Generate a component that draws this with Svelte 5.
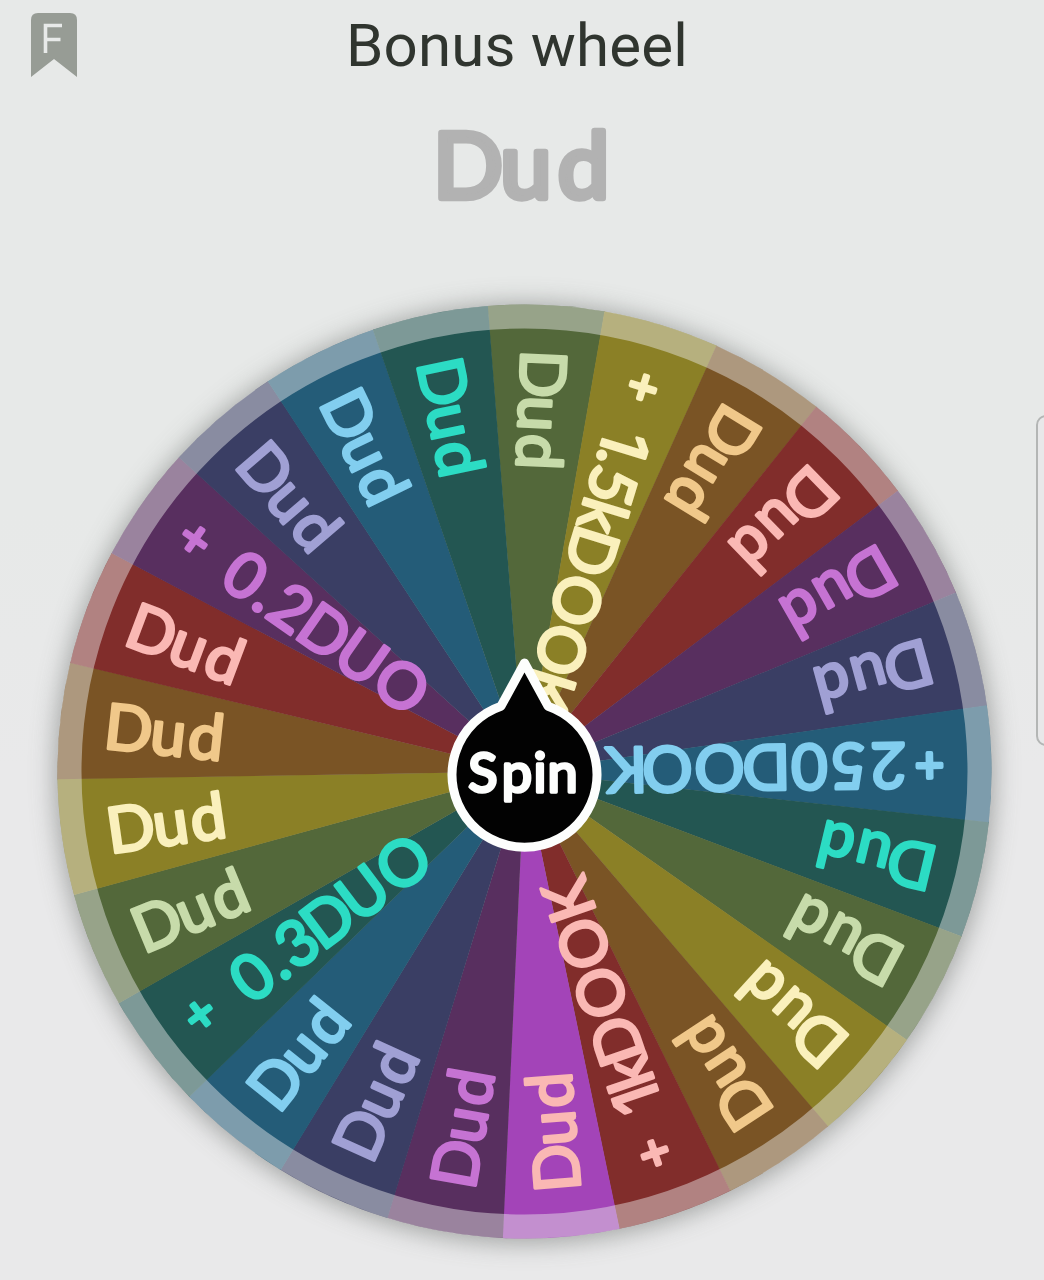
<script>
  const CX = 524.5;
  const CY = 511.5;
  const R = 467;
  const STEP = 14.4;
  const START = 355.45;

  const tones = {
    green: { fill: '#53683a', ink: '#c7dbaa' },
    yellow: { fill: '#8b8026', ink: '#faf0bc' },
    brown: { fill: '#7a5425', ink: '#f0c88a' },
    red: { fill: '#812d2b', ink: '#fab8b4' },
    purple: { fill: '#582f5f', ink: '#c673d3' },
    navy: { fill: '#3a3e64', ink: '#a0a0d4' },
    blue: { fill: '#245c78', ink: '#82ceef' },
    teal: { fill: '#235652', ink: '#2cdcc4' },
    bright: { fill: '#a344b8', ink: '#fab8b4' }
  };

  const order = ['green', 'yellow', 'brown', 'red', 'purple', 'navy', 'blue', 'teal'];

  // Distance of each glyph's middle from the wheel's centre.
  const dud = { text: 'Dud', at: [398, 358, 320] };
  const prizes = {
    1: { text: '+1.5kDOOK', at: [402, 342, 325, 299, 267, 230, 179, 127, 84] },
    6: { text: '+250DOOK', at: [405, 364, 324, 285, 242, 195, 143, 102] },
    11: { text: '+1kDOOK', at: [403, 346, 320, 285, 234, 182, 136] },
    16: { text: '+0.3DUO', at: [405, 341, 313, 285, 246, 202, 152] },
    21: { text: '+0.2DUO', at: [403, 341, 313, 285, 244, 199, 150] }
  };

  function toneOf(i) {
    if (i < 12) return order[i % 8];
    if (i === 12) return 'bright';
    return ['purple', 'navy', 'blue', 'teal', 'green', 'yellow', 'brown', 'red'][(i - 13) % 8];
  }

  function point(deg) {
    const a = (deg * Math.PI) / 180;
    return `${(CX + R * Math.sin(a)).toFixed(2)} ${(CY - R * Math.cos(a)).toFixed(2)}`;
  }

  const slices = Array.from({ length: 25 }, (_, i) => {
    const from = START + i * STEP;
    const label = prizes[i] ?? dud;
    return {
      tone: tones[toneOf(i)],
      path: `M${CX} ${CY}L${point(from)}A${R} ${R} 0 0 1 ${point(from + STEP + 0.05)}Z`,
      turn: from + STEP / 2 - 270,
      glyphs: [...label.text].map((ch, k) => ({ ch, x: -label.at[k] }))
    };
  });
</script>

<main>
  <header>
    <svg class="bookmark" viewBox="0 0 46 64" width="46" height="64">
      <path d="M0 7Q0 0 7 0H39Q46 0 46 7V64L23 46L0 64Z" />
      <path class="mark" d="M31 12.5H14.5V40M14.5 26.500H29.500" />
    </svg>
    <h1>Bonus wheel</h1>
  </header>

  <svg class="result" viewBox="0 0 1044 140" width="1044" height="140">
    <text x="468 526 583.500" y="104">Dud</text>
  </svg>

  <svg class="wheel" viewBox="0 0 1044 1020" width="1044" height="1020">
    <defs>
      <filter id="soft" x="-10%" y="-10%" width="120%" height="120%">
        <feGaussianBlur stdDeviation="13" />
      </filter>
    </defs>
    <circle class="shadow" cx={CX} cy={CY + 2} r="469" filter="url(#soft)" />
    {#each slices as s}
      <path d={s.path} fill={s.tone.fill} />
    {/each}
    <circle class="rim" cx={CX} cy={CY} r="455" />
    {#each slices as s}
      <g transform={`translate(${CX} ${CY}) rotate(${s.turn})`} fill={s.tone.ink} stroke={s.tone.ink}>
        <text class="label">
          {#each s.glyphs as g}<tspan class:plus={g.ch === '+'} class:one={g.ch === '1'} x={g.x} y={g.ch === '+' ? 16 : 22.5}>{g.ch}</tspan>{/each}
        </text>
      </g>
    {/each}
    <path class="hub" d="M501 446.200L524.500 403L548 446.200A72.500 72.500 0 1 1 501 446.200Z" />
    <text class="spin" x="483 517 540 562.500" y="532">Spin</text>
  </svg>

  <aside></aside>
</main>

<style>
  :global(body) {
    background: #e7e9e8;
  }
  main {
    position: relative;
    width: 1044px;
    height: 1280px;
    overflow: hidden;
    display: flex;
    flex-direction: column;
    background: linear-gradient(#e7e9e8 0 40%, #e9e9ea 60%);
  }
  header {
    display: grid;
    grid-template-columns: 46px 1fr 46px;
    align-items: start;
    height: 94px;
    box-sizing: border-box;
    padding: 13px 41px 0 31px;
    flex: none;
  }
  .bookmark {
    fill: #979c95;
  }
  .mark {
    fill: none;
    stroke: #e8eae9;
    stroke-width: 3.6;
  }
  h1 {
    margin: -2px 0 0;
    text-align: center;
    font: 400 60px/70px Roboto, sans-serif;
    letter-spacing: 0.2px;
    color: #30352f;
  }
  .result,
  .wheel {
    display: block;
    flex: none;
  }
  .wheel {
    margin-top: 26px;
  }
  .result text {
    font: 400 92px Lato, sans-serif;
    text-anchor: middle;
    fill: #b2b2b2;
    stroke: #b2b2b2;
    stroke-width: 6.5;
    stroke-linejoin: round;
  }
  .shadow {
    fill: #8d908e;
    opacity: 0.82;
  }
  .rim {
    fill: none;
    stroke: rgba(235, 235, 235, 0.45);
    stroke-width: 24;
  }
  .label {
    font: 400 63px Lato, sans-serif;
    text-anchor: middle;
    stroke-width: 3.2;
    stroke-linejoin: round;
  }
  .plus {
    font-size: 50px;
    stroke-width: 4;
  }
  .one {
    font-family: Inter, sans-serif;
  }
  .hub {
    fill: #020202;
    stroke: #fdfefd;
    stroke-width: 9;
    stroke-linejoin: round;
  }
  .spin {
    font: 400 54px Lato, sans-serif;
    text-anchor: middle;
    fill: #fdfefd;
    stroke: #fdfefd;
    stroke-width: 3.4;
    stroke-linejoin: round;
  }
  aside {
    position: absolute;
    left: 1036px;
    top: 415px;
    width: 30px;
    height: 327px;
    border: 2px solid #b4b6b5;
    border-radius: 10px;
    background: #e8e8e9;
  }
</style>
